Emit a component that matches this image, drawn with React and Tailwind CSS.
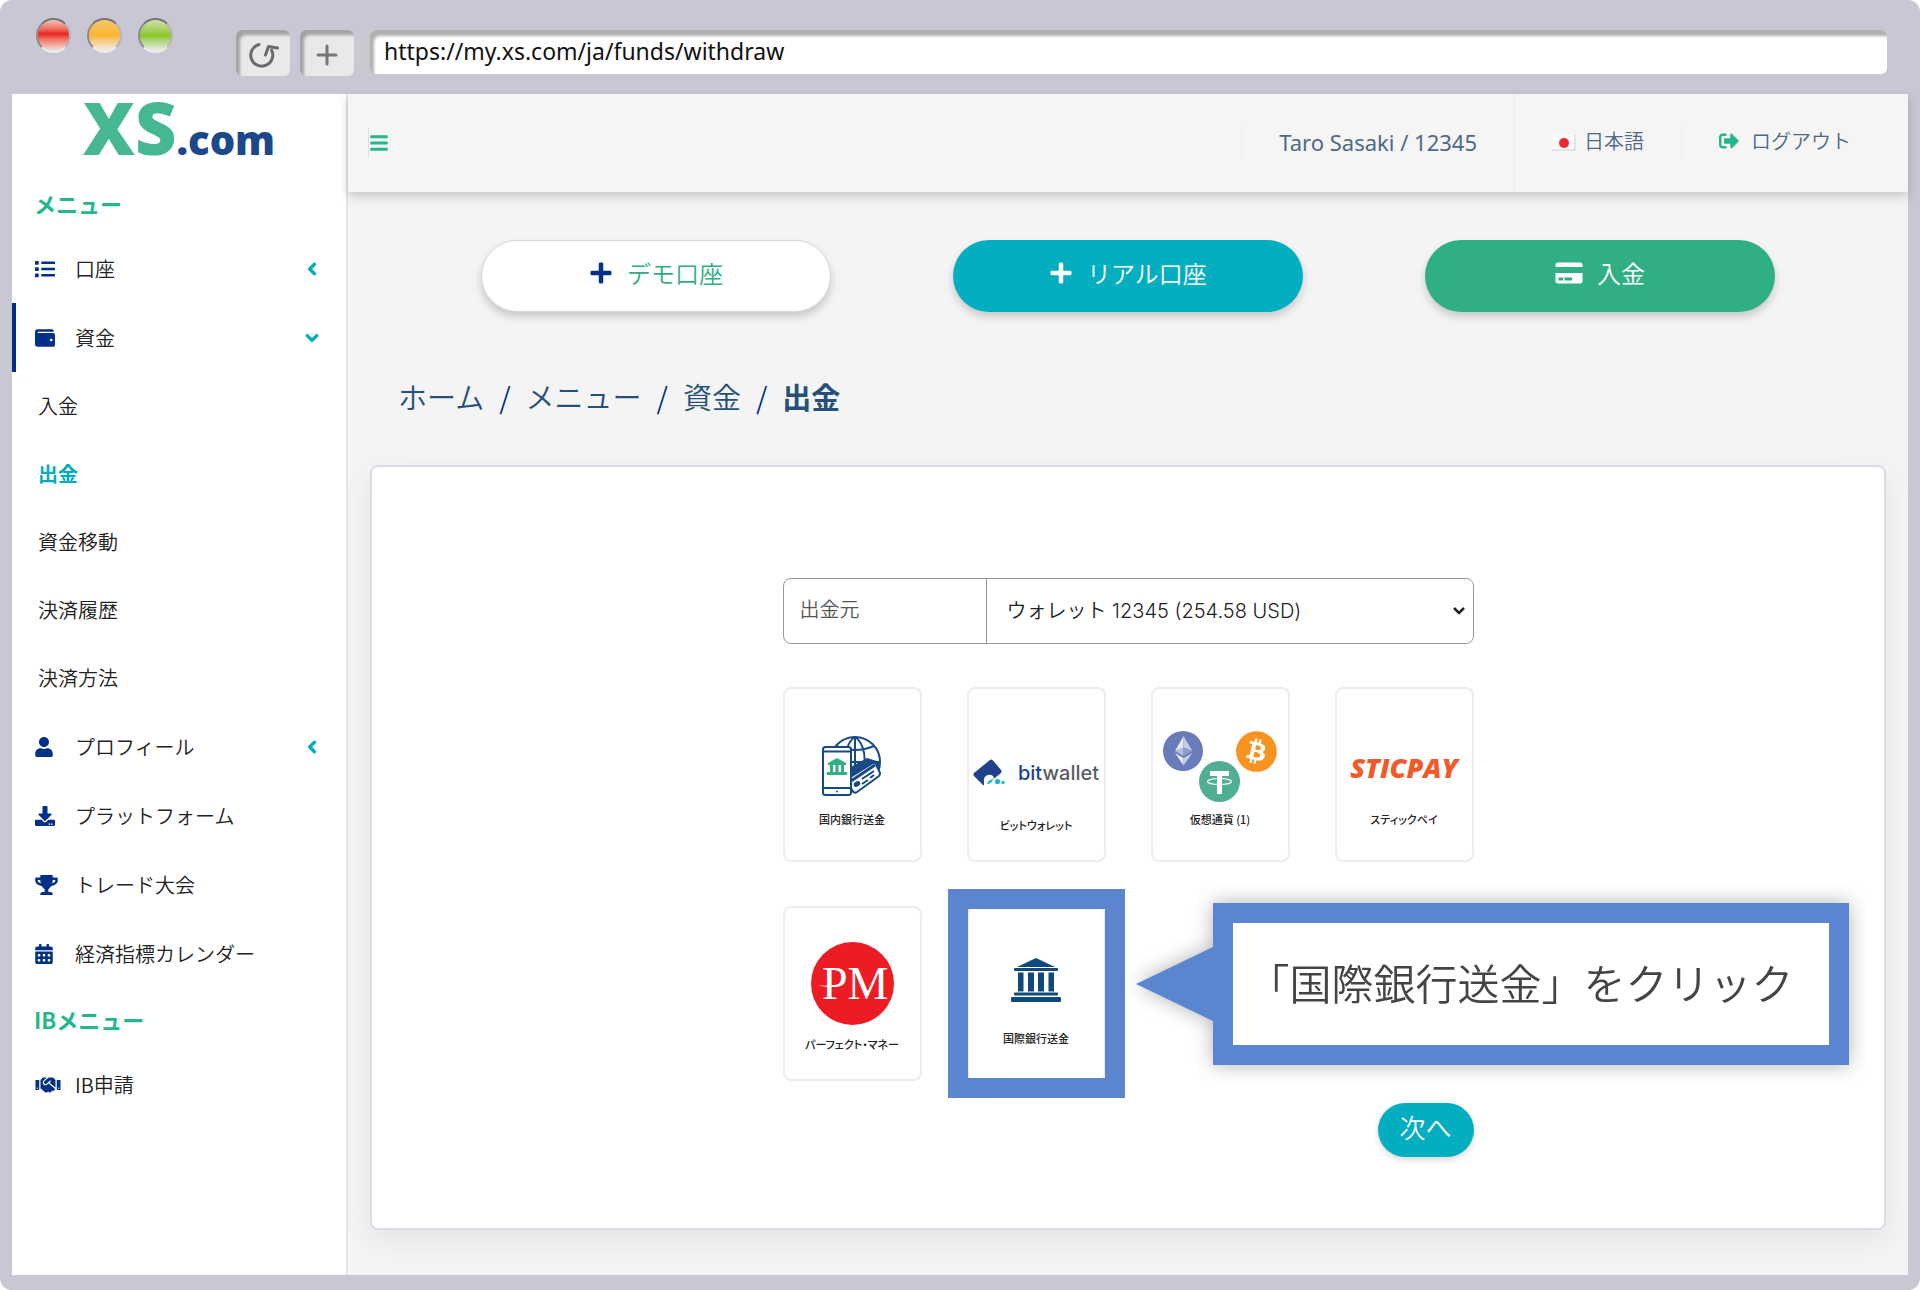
import { useState } from "react";
import {
  FaBars,
  FaBitcoin,
  FaCalendarAlt,
  FaChevronDown,
  FaChevronLeft,
  FaCreditCard,
  FaDownload,
  FaHandshake,
  FaList,
  FaPlus,
  FaSignOutAlt,
  FaTrophy,
  FaUser,
  FaWallet,
} from "react-icons/fa";

const fundLinks = ["入金", "出金", "資金移動", "決済履歴", "決済方法"];

const menuBottom = [
  { label: "プロフィール", icon: FaUser, size: "w-[18px]", arrow: true },
  { label: "プラットフォーム", icon: FaDownload, size: "w-5" },
  { label: "トレード大会", icon: FaTrophy, size: "w-[23px]" },
  { label: "経済指標カレンダー", icon: FaCalendarAlt, size: "w-[18px]" },
];

function BrowserBar() {
  return (
    <div className="flex h-[94px] items-start pl-6 pr-[21px]">
      <div className="flex gap-4 pt-[18px]">
        <button aria-label="閉じる" className="h-[35px] w-[35px] rounded-full border-2 border-t-[#77757a] border-l-[#8d8b90] border-r-[#b5b4bd] border-b-[#ececee] bg-linear-to-b from-[#f0c3bb] from-0% via-[#e81c1c] via-45% to-[#e9e6e4]" />
        <button aria-label="最小化" className="h-[35px] w-[35px] rounded-full border-2 border-t-[#77757a] border-l-[#8d8b90] border-r-[#b5b4bd] border-b-[#ececee] bg-linear-to-b from-[#f8c56a] from-0% via-[#f9b62c] via-50% to-[#efeeec]" />
        <button aria-label="最大化" className="h-[35px] w-[35px] rounded-full border-2 border-t-[#77757a] border-l-[#8d8b90] border-r-[#b5b4bd] border-b-[#ececee] bg-linear-to-b from-[#cfe0a8] from-0% via-[#8dc51f] via-50% to-[#efeeec]" />
      </div>
      <div className="ml-[63px] flex gap-[10px] pt-[30px]">
        <button aria-label="再読み込み" className="flex h-[46px] w-[54px] items-center justify-center rounded-md bg-[#e9e9e9] pt-1 shadow-[inset_4px_5px_3px_#a3a3a3]">
          <svg viewBox="0 0 32 28" className="h-7 w-8" fill="none" stroke="#6b6b6b" strokeWidth="3" strokeLinecap="round" strokeLinejoin="round">
            <path d="M12 3.5A11 11 0 1 0 24.5 9" />
            <path d="M18.5 14 L21.5 5.5 L30.5 7" />
          </svg>
        </button>
        <button aria-label="新しいタブ" className="flex h-[46px] w-[54px] items-center justify-center rounded-md bg-[#e9e9e9] pt-1 shadow-[inset_4px_5px_3px_#a3a3a3]">
          <svg viewBox="0 0 22 22" className="h-[22px] w-[22px]" stroke="#777" strokeWidth="3" strokeLinecap="round">
            <path d="M11 2v18M2 11h18" />
          </svg>
        </button>
      </div>
      <div className="ml-4 flex-1 pt-[30px]">
        <input
          aria-label="アドレス"
          defaultValue="https://my.xs.com/ja/funds/withdraw"
          className="block h-11 w-full rounded-md bg-white pl-[14px] pb-[2px] font-['Noto_Sans'] text-[23px] font-normal text-[#111] shadow-[inset_4px_6px_3px_#b0b0b0]"
        />
      </div>
    </div>
  );
}

function MenuRow({ item, active, open }) {
  const Icon = item.icon;
  return (
    <a href="#" className="relative flex h-[69px] items-center pl-[23px] pr-[26px] text-xl">
      {active && <span className="absolute inset-y-0 left-0 w-1 bg-[#003087]" />}
      <span className="w-10 shrink-0">
        <Icon className={`h-5 text-[#003087] ${item.size}`} />
      </span>
      <span className="flex-1">{item.label}</span>
      {open && <FaChevronDown className="h-[14px] w-4 stroke-[#00adbe] stroke-[40] text-[#00adbe]" />}
      {item.arrow && <FaChevronLeft className="h-[14px] w-4 stroke-[#00adbe] stroke-[40] text-[#00adbe]" />}
    </a>
  );
}

function Sidebar() {
  return (
    <aside className="w-[336px] shrink-0 border-r-2 border-[#e6e6e6] bg-white text-[#222]">
      <a href="#" className="flex h-[78px] items-baseline justify-center font-['Open_Sans'] leading-[66px]">
        <span className="text-[72px] font-extrabold text-[#45b791]">XS</span>
        <span className="text-[40px] font-extrabold text-[#1b478b]">.com</span>
      </a>
      <h2 className="flex h-[62px] items-center pl-[22px] text-[22px] font-bold text-[#24b78c]">メニュー</h2>
      <nav>
        <MenuRow item={{ label: "口座", icon: FaList, size: "w-5", arrow: true }} />
        <MenuRow item={{ label: "資金", icon: FaWallet, size: "w-5" }} active open />
        {fundLinks.map((label) => (
          <a
            key={label}
            href="#"
            className={`flex h-17 items-center pl-[26px] text-xl ${label === "出金" ? "font-bold text-[#00adbe]" : ""}`}
          >
            {label}
          </a>
        ))}
        {menuBottom.map((item) => (
          <MenuRow key={item.label} item={item} />
        ))}
      </nav>
      <h2 className="flex h-[62px] items-center pl-[22px] text-[22px] font-bold text-[#24b78c]">IBメニュー</h2>
      <MenuRow item={{ label: "IB申請", icon: FaHandshake, size: "w-[26px]" }} />
    </aside>
  );
}

function Header() {
  return (
    <header className="relative flex h-[98px] items-center justify-between bg-[#f5f5f5] pl-5 text-xl text-[#4f6889] shadow-[0_4px_10px_rgba(0,0,0,0.2)]">
      <button aria-label="メニュー" className="h-[30px] border-l border-[#e0e0e0]">
        <FaBars className="h-5 w-5 text-[#24b78c]" />
      </button>
      <div className="flex h-full items-center">
        <span className="border-l border-[#ececec] px-[37px] pb-[2px] font-['Noto_Sans'] text-[22px] font-normal">Taro Sasaki / 12345</span>
        <a href="#" className="flex h-full items-center gap-2 border-l border-[#ececec] px-[37px] pb-1">
          <svg viewBox="0 0 24 16" className="mt-1 h-4 w-6">
            <rect width="24" height="16" fill="#e2e2e2" />
            <rect width="22" height="14" fill="#fafafa" />
            <circle cx="12" cy="8" r="5" fill="#f0262c" />
          </svg>
          日本語
        </a>
        <a href="#" className="flex items-center gap-3 border-l border-[#ececec] pl-[37px] pr-[57px] pb-1">
          <FaSignOutAlt className="h-5 w-5 text-[#24b78c]" />
          ログアウト
        </a>
      </div>
    </header>
  );
}

function Actions() {
  return (
    <div className="grid grid-cols-3 justify-items-center px-18 text-2xl">
      <button className="flex h-18 w-[350px] items-center justify-center gap-[14px] rounded-full border border-[#d3d6e0] bg-white pb-[6px] text-[#2fae84] shadow-[0_5px_8px_rgba(0,0,0,0.18)]">
        <FaPlus className="h-6 w-6 text-[#003087]" />
        デモ口座
      </button>
      <button className="flex h-18 w-[350px] items-center justify-center gap-[14px] rounded-full bg-[#02aec0] pb-[6px] text-white shadow-[0_5px_8px_rgba(0,0,0,0.18)]">
        <FaPlus className="h-6 w-6" />
        リアル口座
      </button>
      <button className="flex h-18 w-[350px] items-center justify-center gap-[14px] rounded-full bg-[#31af84] pb-[6px] text-white shadow-[0_5px_8px_rgba(0,0,0,0.18)]">
        <FaCreditCard className="h-6 w-7" />
        入金
      </button>
    </div>
  );
}

function DomesticBankLogo() {
  return (
    <svg viewBox="0 0 60 60" className="h-[60px] w-[60px]" fill="none" stroke="#164a85" strokeWidth="2">
      <circle cx="33" cy="26" r="25" />
      <path d="M33 1v50M8 26h50M14 10q19 8 38 0M33 1C20 9 20 40 33 51M33 1c13 8 13 39 0 50" />
      <path d="M27 32 L45 22 L58 26 L56 36 L27 54Z" fill="#164a85" stroke="none" />
      <path d="M27 42 L51 27 Q53 26 54 28 L58 37 Q58 39 57 40 L35 56 Q32 58 30 54 L26 45Z" fill="#fff" />
      <path d="M26 47 L53 29" strokeWidth="3" />
      <path d="M40 43l12-8M40 48l6-4M48 42l4-3" />
      <ellipse cx="35" cy="48" rx="3.500" ry="2.500" transform="rotate(-30 35 48)" fill="#164a85" stroke="none" />
      <rect x="1" y="11" width="28" height="48" rx="2.500" fill="#fff" />
      <path d="M1 15.500h28M1 52h28" />
      <circle cx="15" cy="55.500" r="1" fill="#164a85" stroke="none" />
      <g fill="#2fb083" stroke="none">
        <path d="M15 22 L24 27v2H6v-2Z" />
        <path d="M8 29h3v7H8zM13.500 29h3v7h-3zM19 29h3v7h-3zM5 36h20v3H5z" />
      </g>
    </svg>
  );
}

function BitwalletLogo() {
  return (
    <div className="flex items-center gap-[13px]">
      <svg viewBox="0 0 32 28" className="h-7 w-8 shrink-0">
        <path d="M1 14 L17 1 Q18.500 0 20 1.500 L28 11 Q29 12.500 28 14 L13 26 Q11 27.500 9.500 25.500 L1 17 Q0 15.500 1 14Z" fill="#20428a" />
        <path d="M11 22a5 5 0 0 1 4-6 5 5 0 0 1 6 3l-6 8h-4z" fill="#fff" />
        <path d="M14 25q1-4 6-5-1 5-6 5z" fill="#1fb2dc" />
        <circle cx="24.500" cy="22.500" r="2.600" fill="#1fb2dc" />
        <circle cx="30" cy="23.500" r="1.700" fill="#1fb2dc" />
      </svg>
      <span className="font-['Inter'] text-xl font-medium text-[#5a5c60]">
        <span className="text-[#20428a]">bit</span>wallet
      </span>
    </div>
  );
}

function CryptoLogo() {
  return (
    <svg viewBox="0 0 114 71" className="h-[71px] w-[114px]">
      <circle cx="20" cy="20" r="20" fill="#687bba" />
      <path d="M20.500 5 L12 20 L20.500 16.500Z" fill="#e4e8f5" />
      <path d="M20.500 5 L29.500 20 L20.500 16.500Z" fill="#c5cde6" />
      <path d="M12 20 L20.500 16.500 V25Z" fill="#b5bfdf" />
      <path d="M29.500 20 L20.500 16.500 V25Z" fill="#8f9ccb" />
      <path d="M12 22 L20.500 27 V34.500Z" fill="#e4e8f5" />
      <path d="M29.500 22 L20.500 27 V34.500Z" fill="#c5cde6" />
      <circle cx="93.500" cy="20.500" r="19" fill="#fff" />
      <FaBitcoin x="72.500" y="-0.500" size={42} color="#f79420" />
      <circle cx="56.500" cy="50.500" r="20.500" fill="#4fae94" />
      <path d="M47 40h19v5h-7v18h-5V45h-7z" fill="#fff" />
      <ellipse cx="56.500" cy="50.500" rx="12" ry="3" fill="none" stroke="#fff" strokeWidth="1.200" />
    </svg>
  );
}

function SticpayLogo() {
  return <span className="font-['Open_Sans'] text-[27px] font-extrabold italic text-[#f15a29]">STICPAY</span>;
}

function PerfectMoneyLogo() {
  return (
    <svg viewBox="0 0 83 83" className="h-[83px] w-[83px]">
      <circle cx="41.500" cy="41.500" r="41.500" fill="#ed1c24" />
      <text x="11" y="57" fill="#fff" className="font-['Liberation_Serif'] text-[46px]">PM</text>
      <path d="M7 43q14 2 25-2-10 7-25 2z" fill="#fff" />
    </svg>
  );
}

function BankLogo() {
  return (
    <svg viewBox="0 0 50 44" className="h-11 w-[50px]" fill="#0f497b">
      <path d="M25 0 L44 9H6z" />
      <rect x="3" y="10" width="44" height="3" rx="1" />
      <path d="M7 14.500h5.500V33.500H7zM17 14.500h6V33.500h-6zM27 14.500h6V33.500h-6zM37.500 14.500H43V33.500h-5.500z" />
      <rect x="3" y="34.500" width="44" height="3" rx="1" />
      <rect x="0" y="39" width="50" height="5" rx="1" />
    </svg>
  );
}

const methods = [
  { label: "国内銀行送金", logo: DomesticBankLogo, box: "h-[86px] items-center" },
  { label: "ビットウォレット", logo: BitwalletLogo, box: "h-[92px] items-center pt-2" },
  { label: "仮想通貨 (1)", logo: CryptoLogo, box: "h-[86px] items-center" },
  { label: "スティックペイ", logo: SticpayLogo, box: "h-[86px] items-center pt-1" },
  { label: "パーフェクト・マネー", logo: PerfectMoneyLogo, box: "h-[92px] items-start" },
  { label: "国際銀行送金", logo: BankLogo, box: "h-[86px] items-start pt-4", marked: true },
];

function Callout() {
  return (
    <div className="absolute left-[169px] -top-[3px] flex items-center drop-shadow-[0_0_10px_rgba(0,0,0,0.3)]">
      <svg viewBox="0 0 77 74" className="h-[74px] w-[77px]" fill="#5b86cf">
        <path d="M0 37 L77 0V74z" />
      </svg>
      <p className="border-20 border-[#5b86cf] bg-white pt-[26px] pr-[35px] pb-[30px] pl-[15px] text-[42px] leading-[66px] whitespace-nowrap text-[#444]">
        「国際銀行送金」をクリック
      </p>
    </div>
  );
}

function PaymentMethod({ item }) {
  const Logo = item.logo;
  return (
    <div className="relative">
      <button className="flex h-[175px] w-full flex-col items-center rounded-lg border-2 border-[#ebebf0] bg-white pt-[34px]">
        <span className={`flex justify-center ${item.box}`}>
          <Logo />
        </span>
        <span className="text-[11px] leading-5 font-medium whitespace-nowrap text-[#222] [font-feature-settings:'palt']">{item.label}</span>
      </button>
      {item.marked && (
        <>
          <span className="pointer-events-none absolute -inset-x-[19px] -inset-y-[17px] border-20 border-[#5b86cf]" />
          <Callout />
        </>
      )}
    </div>
  );
}

function WithdrawForm() {
  const [source, setSource] = useState("wallet");

  return (
    <section className="mx-[22px] mt-[46px] mb-[45px] flex-1 rounded-lg border-2 border-[#d9dde5] bg-white pt-[111px] pb-[66px] shadow-[0_10px_30px_rgba(0,0,0,0.07)]">
      <form className="mx-auto w-[691px]" onSubmit={(e) => e.preventDefault()}>
        <div className="flex h-[66px] rounded-lg border border-[#999] text-xl">
          <label htmlFor="source" className="flex w-[203px] items-center border-r border-[#999] pb-1 pl-4 text-[#555]">
            出金元
          </label>
          <div className="relative flex flex-1 items-center">
            <select
              id="source"
              value={source}
              onChange={(e) => setSource(e.target.value)}
              className="h-full w-full appearance-none rounded-r-lg bg-white pl-5 font-['Inter','Noto_Sans_CJK_JP',sans-serif] text-[#222]"
            >
              <option value="wallet">ウォレット 12345 (254.58 USD)</option>
            </select>
            <svg viewBox="0 0 12 8" className="pointer-events-none absolute right-2 h-2 w-3" fill="none" stroke="#222" strokeWidth="2.500">
              <path d="M1 1l5 5 5-5" />
            </svg>
          </div>
        </div>
        <div className="mt-[43px] grid grid-cols-4 gap-x-[45px] gap-y-11">
          {methods.map((item) => (
            <PaymentMethod key={item.label} item={item} />
          ))}
        </div>
        <div className="mt-[22px] flex justify-end">
          <button className="h-[54px] w-24 rounded-full bg-[#02aec0] pb-2 text-[26px] text-white shadow-[0_3px_6px_rgba(0,0,0,0.15)]">次へ</button>
        </div>
      </form>
    </section>
  );
}

function App() {
  return (
    <div className="flex min-h-screen flex-col rounded-xl bg-[#c8c7d3] px-3 pb-[15px] font-['Noto_Sans_CJK_JP',sans-serif] font-[350]">
      <BrowserBar />
      <div className="flex flex-1 bg-[#f4f4f4]">
        <Sidebar />
        <main className="flex min-w-0 flex-1 flex-col">
          <Header />
          <div className="pt-12">
            <Actions />
          </div>
          <nav className="mt-[63px] flex h-11 items-center gap-[15px] pl-[50px] text-[29px] text-[#26507a]">
            <a href="#">ホーム</a>
            <span className="text-[#003087]">/</span>
            <a href="#">メニュー</a>
            <span className="text-[#003087]">/</span>
            <a href="#">資金</a>
            <span className="text-[#003087]">/</span>
            <span className="font-bold">出金</span>
          </nav>
          <WithdrawForm />
        </main>
      </div>
    </div>
  );
}

export default App;
